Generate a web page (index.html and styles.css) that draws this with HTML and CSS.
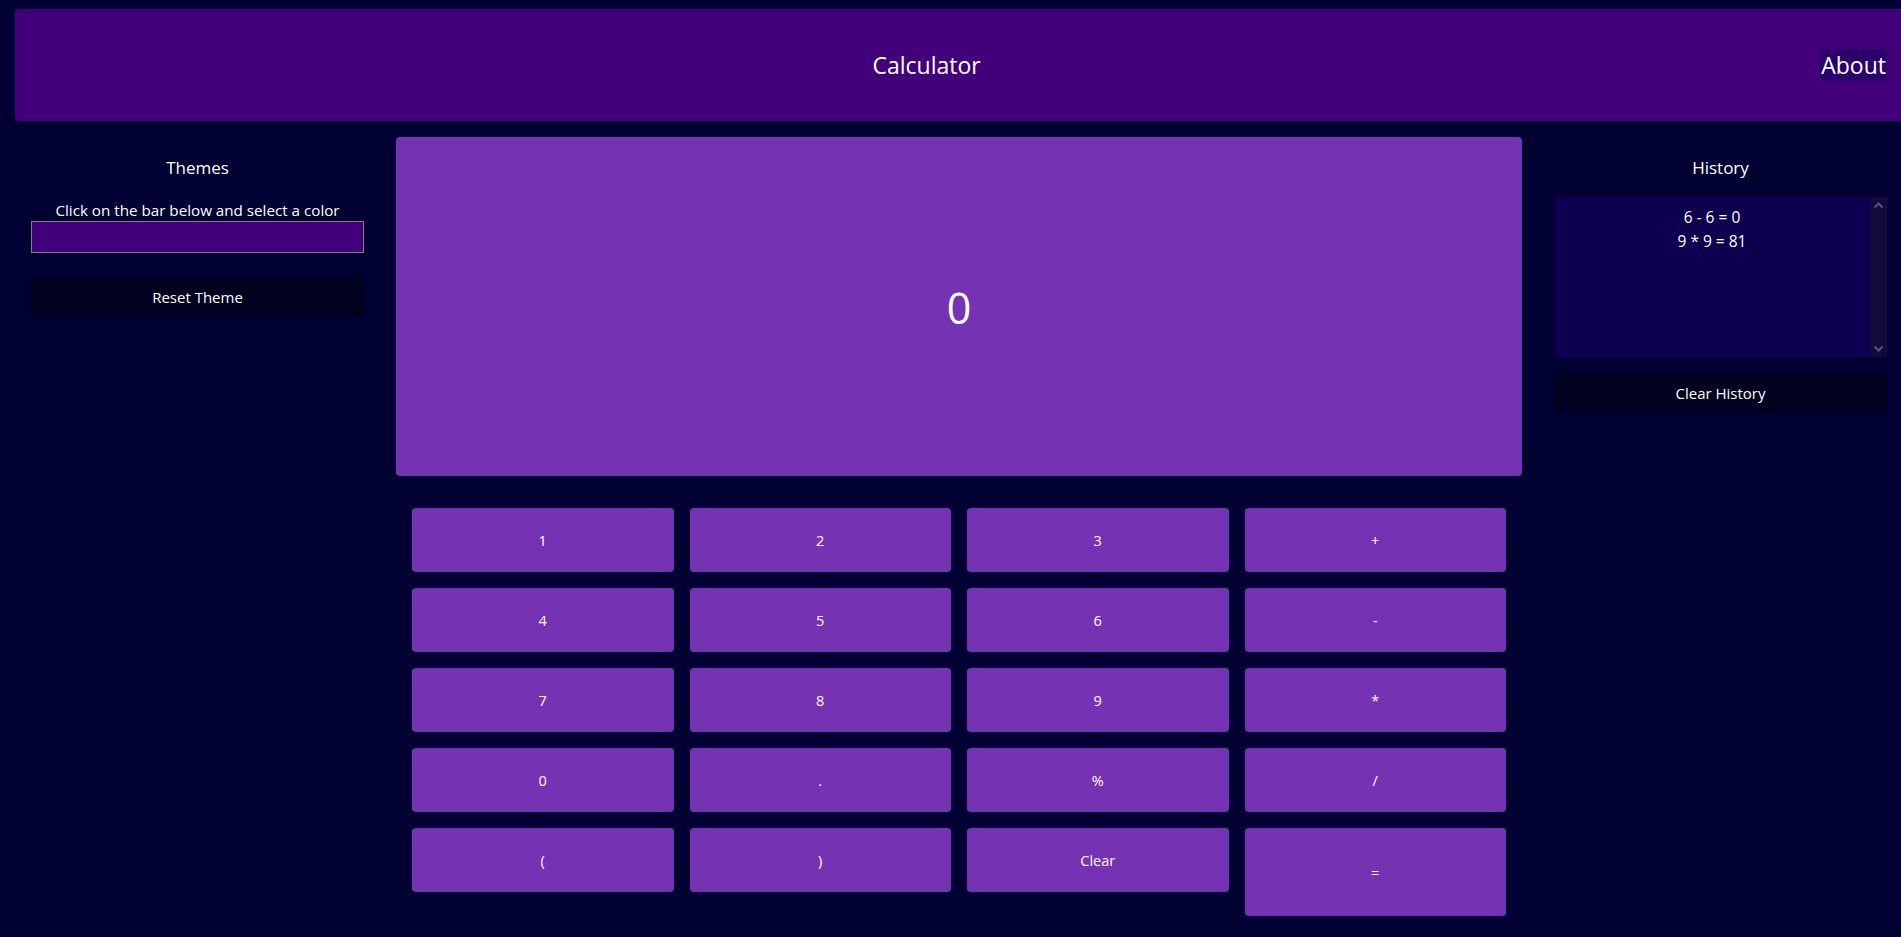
FILE: index.html
```html
<!DOCTYPE html>
<html lang="en">
<head>
<meta charset="utf-8">
<title>Calculator</title>
<link rel="stylesheet" href="styles.css">
</head>
<body>
<header class="topbar">
  <h1 class="topbar-title">Calculator</h1>
  <a class="topbar-link">About</a>
</header>
<main class="layout">
  <aside class="side">
    <h2 class="side-title">Themes</h2>
    <p class="side-hint">Click on the bar below and select a color</p>
    <div class="color-bar"></div>
    <button class="dark-btn">Reset Theme</button>
  </aside>
  <section class="calc">
    <div class="display">0</div>
    <div class="keypad">
      <button class="key">1</button>
      <button class="key">2</button>
      <button class="key">3</button>
      <button class="key">+</button>
      <button class="key">4</button>
      <button class="key">5</button>
      <button class="key">6</button>
      <button class="key">-</button>
      <button class="key">7</button>
      <button class="key">8</button>
      <button class="key">9</button>
      <button class="key">*</button>
      <button class="key">0</button>
      <button class="key">.</button>
      <button class="key">%</button>
      <button class="key">/</button>
      <button class="key">(</button>
      <button class="key">)</button>
      <button class="key">Clear</button>
      <button class="key key-equals">=</button>
    </div>
  </section>
  <aside class="side">
    <h2 class="side-title">History</h2>
    <div class="history-box">
      <div class="history-list">
        <div class="history-item">6 - 6 = 0</div>
        <div class="history-item">9 * 9 = 81</div>
      </div>
      <div class="scrollbar">
        <svg class="scroll-arrow" width="17" height="17" viewBox="0 0 17 17"><path d="M4.5 10.5 L8.5 6.5 L12.5 10.5" fill="none" stroke="#5b5184" stroke-width="2"/></svg>
        <svg class="scroll-arrow" width="17" height="17" viewBox="0 0 17 17"><path d="M4.5 6.5 L8.5 10.5 L12.5 6.5" fill="none" stroke="#5b5184" stroke-width="2"/></svg>
      </div>
    </div>
    <button class="dark-btn">Clear History</button>
  </aside>
</main>
</body>
</html>
```
FILE: styles.css
```css
* { box-sizing: border-box; }

html, body {
  margin: 0;
  padding: 0;
  background: #000033;
  color: #ffffff;
  font-family: "Segoe UI", "Open Sans", "Noto Sans", sans-serif;
  overflow: hidden;
}

.topbar {
  margin: 9px 0 0 15px;
  height: 112px;
  background: #42007a;
  border-radius: 4px 0 0 4px;
  display: flex;
  align-items: center;
  padding-right: 14px;
}

.topbar-title {
  flex: 1;
  margin: 0;
  padding-left: 18px;
  text-align: center;
  font-size: 23px;
  font-weight: 400;
  line-height: 32px;
}

.topbar-link {
  background: #2c006b;
  color: #ffffff;
  font-size: 23px;
  line-height: 32px;
  height: 32px;
  padding: 0 1px;
}

.layout {
  display: flex;
  gap: 32px;
  padding: 16px 14px 0 31px;
}

.side {
  width: 333px;
  flex: none;
  display: flex;
  flex-direction: column;
  align-items: stretch;
  text-align: center;
}

.side-title {
  margin: 19px 0 0;
  font-size: 17px;
  font-weight: 400;
  line-height: 24px;
}

.side-hint {
  margin: 20px 0 0;
  font-size: 15.2px;
  line-height: 20px;
}

.color-bar {
  margin-top: 1px;
  height: 32px;
  background: #42007a;
  border: 1px solid #808080;
}

.dark-btn {
  margin-top: 24px;
  height: 40px;
  border: none;
  border-radius: 4px;
  background: #00001f;
  color: #ffffff;
  font-family: inherit;
  font-size: 15px;
}

.history-box {
  margin-top: 17px;
  height: 160px;
  display: flex;
  background: #0e004e;
  border-radius: 4px 0 0 4px;
}

.history-list {
  flex: 1;
  padding-top: 8px;
}

.history-item {
  font-size: 15.5px;
  line-height: 24px;
}

.scrollbar {
  width: 17px;
  background: #130a3b;
  display: flex;
  flex-direction: column;
  justify-content: space-between;
}

.scroll-arrow { display: block; }

.history-box + .dark-btn { margin-top: 16px; }

.calc {
  flex: 1;
  min-width: 0;
}

.display {
  height: 339px;
  background: #7533b3;
  border-radius: 4px;
  display: flex;
  align-items: center;
  justify-content: center;
  font-size: 43px;
  padding-top: 2px;
}

.keypad {
  margin-top: 16px;
  padding: 16px;
  display: grid;
  grid-template-columns: repeat(4, 1fr);
  gap: 16px;
  align-items: start;
}

.key {
  height: 64px;
  border: none;
  border-radius: 4px;
  background: #7533b3;
  color: #ffffff;
  font-family: inherit;
  font-size: 14.5px;
}

.key-equals { height: 88px; }
```
